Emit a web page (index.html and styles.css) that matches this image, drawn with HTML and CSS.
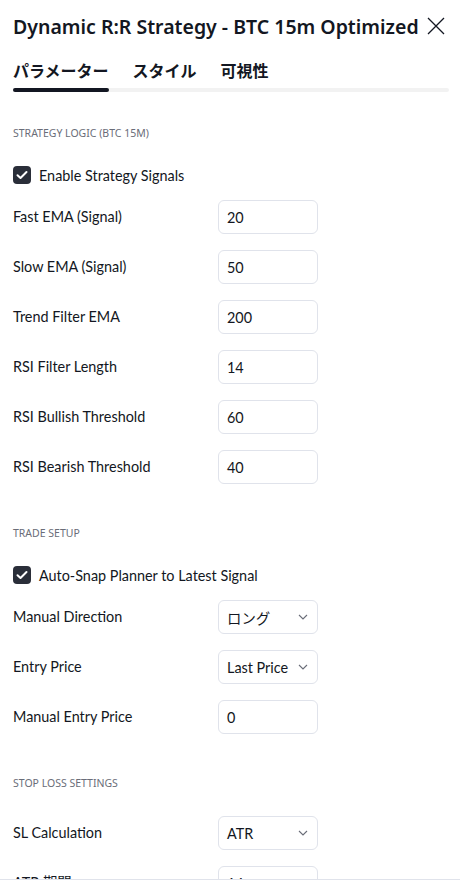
FILE: index.html
```html
<!DOCTYPE html>
<html lang="ja">
<head>
<meta charset="utf-8">
<title>Dynamic R:R Strategy</title>
<link rel="stylesheet" href="styles.css">
</head>
<body>
<div class="dialog">
  <div class="scroll">
    <header class="header">
      <h1 class="title">Dynamic R:R Strategy - BTC 15m Optimized</h1>
      <button class="close" aria-label="close">
        <svg width="18" height="18" viewBox="0 0 18 18"><path d="M1 1L17 17M17 1L1 17" stroke="#131722" stroke-width="1.3" fill="none"/></svg>
      </button>
    </header>
    <nav class="tabs">
      <span class="tab active">パラメーター</span>
      <span class="tab">スタイル</span>
      <span class="tab">可視性</span>
    </nav>
    <div class="track"><div class="track-fill"></div></div>

    <section class="section first">
      <div class="heading">STRATEGY LOGIC (BTC 15M)</div>
      <div class="rows">
        <label class="check-row"><span class="box"><svg width="12" height="10" viewBox="0 0 12 10"><path d="M1.5 5.2L4.5 8L10.5 2" stroke="#fff" stroke-width="2" fill="none" stroke-linecap="round" stroke-linejoin="round"/></svg></span>Enable Strategy Signals</label>
        <div class="row"><span class="label">Fast EMA (Signal)</span><div class="field">20</div></div>
        <div class="row"><span class="label">Slow EMA (Signal)</span><div class="field">50</div></div>
        <div class="row"><span class="label">Trend Filter EMA</span><div class="field">200</div></div>
        <div class="row"><span class="label">RSI Filter Length</span><div class="field">14</div></div>
        <div class="row"><span class="label">RSI Bullish Threshold</span><div class="field">60</div></div>
        <div class="row"><span class="label">RSI Bearish Threshold</span><div class="field">40</div></div>
      </div>
    </section>

    <section class="section">
      <div class="heading">TRADE SETUP</div>
      <div class="rows">
        <label class="check-row"><span class="box"><svg width="12" height="10" viewBox="0 0 12 10"><path d="M1.5 5.2L4.5 8L10.5 2" stroke="#fff" stroke-width="2" fill="none" stroke-linecap="round" stroke-linejoin="round"/></svg></span>Auto-Snap Planner to Latest Signal</label>
        <div class="row"><span class="label">Manual Direction</span><div class="field select"><span>ロング</span><svg class="chev" width="10" height="6" viewBox="0 0 10 6"><path d="M1 1L5 5L9 1" stroke="#6a6d78" stroke-width="1.1" fill="none"/></svg></div></div>
        <div class="row"><span class="label">Entry Price</span><div class="field select"><span>Last Price</span><svg class="chev" width="10" height="6" viewBox="0 0 10 6"><path d="M1 1L5 5L9 1" stroke="#6a6d78" stroke-width="1.1" fill="none"/></svg></div></div>
        <div class="row"><span class="label">Manual Entry Price</span><div class="field">0</div></div>
      </div>
    </section>

    <section class="section">
      <div class="heading">STOP LOSS SETTINGS</div>
      <div class="rows">
        <div class="row"><span class="label">SL Calculation</span><div class="field select"><span>ATR</span><svg class="chev" width="10" height="6" viewBox="0 0 10 6"><path d="M1 1L5 5L9 1" stroke="#6a6d78" stroke-width="1.1" fill="none"/></svg></div></div>
        <div class="row"><span class="label">ATR 期間</span><div class="field">14</div></div>
      </div>
    </section>
  </div>
  <footer class="footer"></footer>
</div>
</body>
</html>
```

FILE: styles.css
```css
* { box-sizing: border-box; }
html, body { margin: 0; padding: 0; background: #fff; }
body {
  font-family: "Lato", "Noto Sans CJK JP", sans-serif;
  color: #131722;
  font-size: 14.4px;
}
.dialog {
  width: 460px;
  height: 880px;
  display: flex;
  flex-direction: column;
  overflow: hidden;
}
.scroll {
  height: 879px;
  overflow: hidden;
  padding: 0 11px 0 13px;
  flex: none;
}
.footer {
  border-top: 1px solid #e0e3eb;
  flex: 1;
}
.header {
  display: flex;
  align-items: center;
  justify-content: space-between;
  height: 52px;
}
.title {
  margin: 0;
  font-family: "Noto Sans", "Noto Sans CJK JP", sans-serif;
  font-size: 19.5px;
  font-weight: 600;
  white-space: nowrap;
}
.close {
  border: 0;
  background: none;
  padding: 0;
  margin-right: 4px;
  width: 18px;
  height: 18px;
  display: flex;
}
.tabs {
  display: flex;
  gap: 24px;
  height: 36px;
  align-items: center;
  font-family: "Noto Sans CJK JP", sans-serif;
  font-size: 16px;
  font-weight: 700;
}
.track {
  height: 4px;
  border-radius: 2px;
  background: #f2f2f2;
}
.track-fill {
  width: 96px;
  height: 4px;
  border-radius: 2px;
  background: #131722;
}
.section { padding-top: 41px; }
.section.first { padding-top: 33px; }
.heading {
  font-family: "Noto Sans", sans-serif;
  font-size: 10.5px;
  line-height: 16px;
  color: #6a6d78;
  margin-bottom: 25px;
}
.rows {
  display: flex;
  flex-direction: column;
  gap: 16px;
}
.check-row {
  display: flex;
  align-items: center;
  gap: 8px;
  height: 18px;
}
.box {
  width: 18px;
  height: 18px;
  border-radius: 4px;
  background: #2a2e39;
  display: flex;
  align-items: center;
  justify-content: center;
}
.row {
  display: grid;
  grid-template-columns: 205px 100px;
  align-items: center;
  height: 34px;
}
.label { line-height: 18px; }
.field {
  height: 34px;
  border: 1px solid #e0e3eb;
  border-radius: 6px;
  padding: 0 8px;
  display: flex;
  align-items: center;
}
.select { justify-content: space-between; padding-right: 9px; }
.chev { flex: none; }
```
